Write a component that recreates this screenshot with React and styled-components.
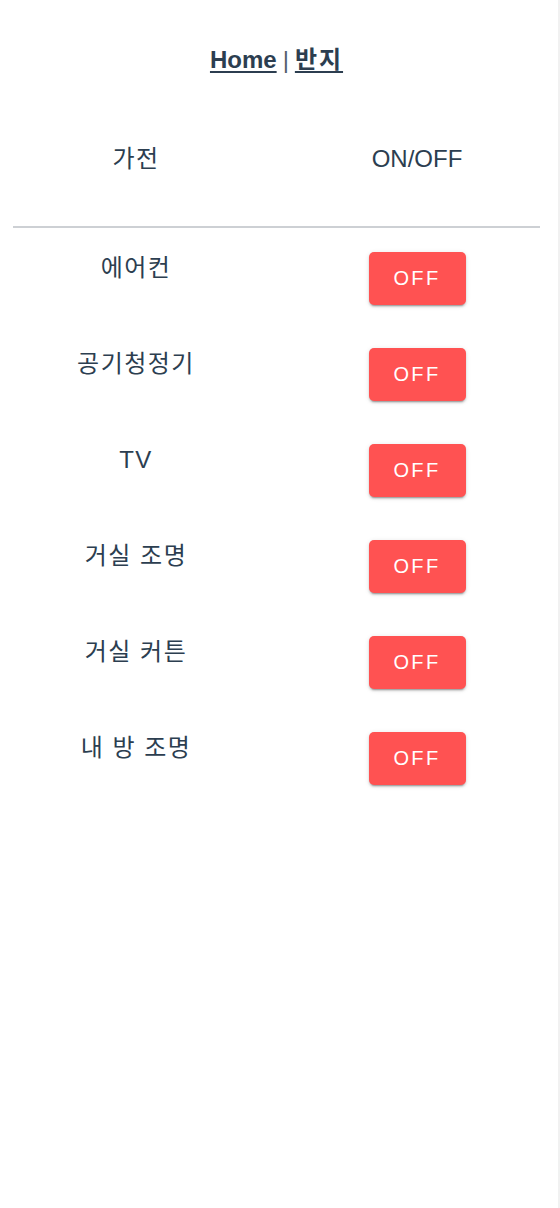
import React from 'react'
import styled, { createGlobalStyle } from 'styled-components'

const GlobalStyle = createGlobalStyle`
  html, body {
    margin: 0;
    padding: 0;
    background: #fff;
  }
  body {
    font-family: "Liberation Sans", "Noto Sans CJK KR", Arial, sans-serif;
    color: #2c3e50;
    -webkit-font-smoothing: antialiased;
  }
`

const Page = styled.div`
  width: 560px;
  min-height: 100vh;
  box-sizing: border-box;
  border-right: 2px solid #f1f1f1;
  padding: 0 18px 0 13px;
`

const Nav = styled.nav`
  padding-top: 44px;
  text-align: center;
  font-size: 24px;
  line-height: 32px;
`

const NavLink = styled.a`
  font-weight: bold;
  color: #2c3e50;
  text-decoration: underline;
  text-decoration-thickness: 2px;
  text-underline-offset: 3px;
  letter-spacing: ${props => (props.wide ? '2px' : '0')};
`

const Divider = styled.span`
  margin: 0 6px;
  font-weight: normal;
  color: #55606c;
`

const Table = styled.div`
  display: flex;
  flex-direction: column;
`

const Row = styled.div`
  display: grid;
  grid-template-columns: 246px 246px;
  column-gap: 35px;
  align-items: start;
  font-size: 24px;
  line-height: 36px;
  padding: ${props => (props.head ? '65px 0 49px' : '22px 0 19px')};
  border-bottom: ${props => (props.head ? '2px solid #cdd0d4' : 'none')};
`

const Cell = styled.div`
  text-align: center;
  display: flex;
  justify-content: center;
  letter-spacing: ${props => (props.label ? '1.5px' : '0')};
`

const OffButton = styled.button`
  width: 97px;
  height: 53px;
  margin-top: 2px;
  border: none;
  border-radius: 5px;
  background: #ff5252;
  color: #fff;
  font-family: "Liberation Sans", Arial, sans-serif;
  font-size: 20px;
  letter-spacing: 2.4px;
  font-weight: 500;
  cursor: pointer;
  box-shadow: 0 3px 1px -2px rgba(0, 0, 0, 0.2), 0 2px 2px 0 rgba(0, 0, 0, 0.14),
    0 1px 5px 0 rgba(0, 0, 0, 0.12);
`

const devices = ['에어컨', '공기청정기', 'TV', '거실 조명', '거실 커튼', '내 방 조명']

export default function App() {
  return (
    <>
      <GlobalStyle />
      <Page>
        <Nav>
          <NavLink href="#">Home</NavLink>
          <Divider>|</Divider>
          <NavLink href="#" wide>반지</NavLink>
        </Nav>
        <Table>
          <Row head>
            <Cell label>가전</Cell>
            <Cell>ON/OFF</Cell>
          </Row>
          {devices.map(name => (
            <Row key={name}>
              <Cell label>{name}</Cell>
              <Cell>
                <OffButton>OFF</OffButton>
              </Cell>
            </Row>
          ))}
        </Table>
      </Page>
    </>
  )
}
